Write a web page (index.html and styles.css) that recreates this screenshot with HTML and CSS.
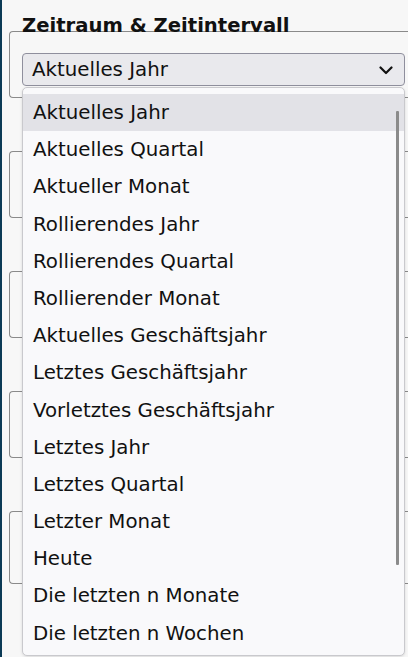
FILE: index.html
```html
<!DOCTYPE html>
<html lang="de">
<head>
<meta charset="utf-8">
<title>Zeitraum</title>
<link rel="stylesheet" href="styles.css">
</head>
<body>
<div class="panel">
  <div class="group group-first">
    <h2 class="legend">Zeitraum &amp; Zeitintervall</h2>
    <div class="select">
      <span>Aktuelles Jahr</span>
      <svg class="chev" width="14" height="9" viewBox="0 0 14 9"><polyline points="1.5,1.5 7,7 12.5,1.5" fill="none" stroke="#111" stroke-width="2.2" stroke-linecap="round" stroke-linejoin="round"/></svg>
    </div>
  </div>
  <div class="group"></div>
  <div class="group"></div>
  <div class="group"></div>
  <div class="group group-last"></div>
</div>
<ul class="dropdown">
  <li class="active">Aktuelles Jahr</li>
  <li>Aktuelles Quartal</li>
  <li>Aktueller Monat</li>
  <li>Rollierendes Jahr</li>
  <li>Rollierendes Quartal</li>
  <li>Rollierender Monat</li>
  <li>Aktuelles Geschäftsjahr</li>
  <li>Letztes Geschäftsjahr</li>
  <li>Vorletztes Geschäftsjahr</li>
  <li>Letztes Jahr</li>
  <li>Letztes Quartal</li>
  <li>Letzter Monat</li>
  <li>Heute</li>
  <li>Die letzten n Monate</li>
  <li>Die letzten n Wochen</li>
</ul>
<div class="thumb"></div>
</body>
</html>
```

FILE: styles.css
```css
html, body {
  margin: 0;
  padding: 0;
}
body {
  height: 657px;
  overflow: hidden;
  background: #f7f7f7;
  border-left: 2px solid #0b3a55;
  font-family: "DejaVu Sans", Verdana, sans-serif;
  color: #111;
  position: relative;
}
.panel {
  padding: 31px 0 0 7px;
  display: flex;
  flex-direction: column;
  gap: 53px;
}
.group {
  box-sizing: border-box;
  height: 67px;
  width: 420px;
  border: 1px solid #8a8a8a;
  border-right: none;
  border-radius: 4px 0 0 4px;
  padding: 0 0 0 12px;
}
.group-last {
  height: 73px;
}
.legend {
  margin: -18px 0 0 0;
  font-size: 19.6px;
  line-height: 24px;
  font-weight: bold;
  color: #111;
  white-space: nowrap;
}
.select {
  box-sizing: border-box;
  margin-top: 15px;
  width: 383px;
  height: 33px;
  border: 1px solid #8f8f9d;
  border-radius: 4px;
  background: #e9e9ed;
  display: flex;
  align-items: center;
  justify-content: space-between;
  padding: 0 11px 0 9px;
  font-size: 19.8px;
}
.chev {
  display: block;
  margin-top: 1px;
}
.dropdown {
  position: absolute;
  left: 20px;
  top: 87px;
  width: 383px;
  box-sizing: border-box;
  height: 569px;
  margin: 0;
  padding: 6px 0 0 0;
  list-style: none;
  background: #f9f9fb;
  border: 1px solid #c9c9cd;
  border-radius: 5px;
  box-shadow: 0 1px 3px rgba(0,0,0,0.12);
  overflow: hidden;
}
.dropdown li {
  height: 37.2px;
  line-height: 37.2px;
  padding-left: 10px;
  font-size: 19.8px;
  white-space: nowrap;
}
.dropdown li.active {
  background: #e2e2e7;
}
.thumb {
  position: absolute;
  left: 394px;
  top: 111px;
  width: 3px;
  height: 454px;
  background: #8b8b8b;
  border-radius: 1px;
}
```
